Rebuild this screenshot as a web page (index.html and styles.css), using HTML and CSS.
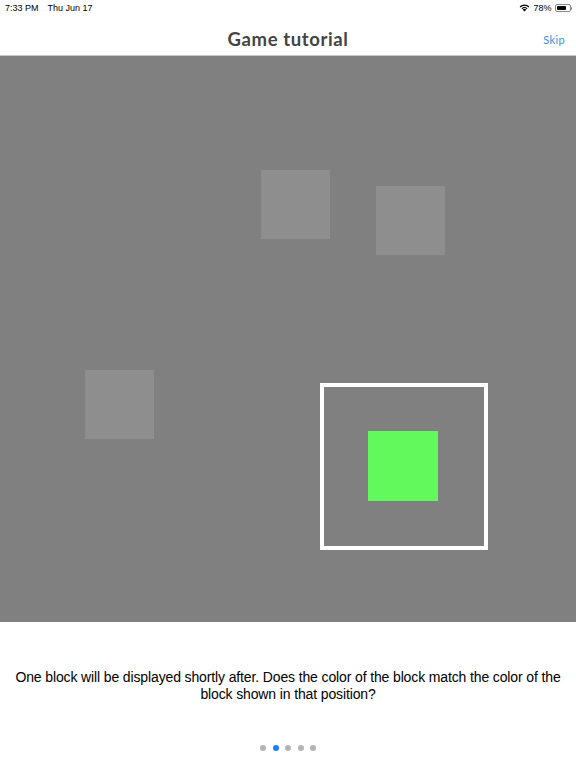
FILE: index.html
```html
<!DOCTYPE html>
<html>
<head>
<meta charset="utf-8">
<link rel="stylesheet" href="styles.css">
</head>
<body>
<div class="screen">
  <div class="status">
    <div class="status-left"><span>7:33 PM</span><span>Thu Jun 17</span></div>
    <div class="status-right">
      <svg class="wifi" width="11" height="8" viewBox="0 0 11 8"><path d="M5.5 7.6 L3.7 5.7 A2.6 2.6 0 0 1 7.3 5.7 Z" fill="#000"/><path d="M2.5 4.5 A4.3 4.3 0 0 1 8.5 4.5 L7.8 5.2 A3.3 3.3 0 0 0 3.2 5.2 Z" fill="#000"/><path d="M0.6 2.6 A7 7 0 0 1 10.4 2.6 L9.6 3.4 A5.9 5.9 0 0 0 1.4 3.4 Z" fill="#000"/></svg>
      <span>78%</span>
      <div class="battery"><div class="battery-body"><div class="battery-fill"></div></div><div class="battery-tip"></div></div>
    </div>
  </div>
  <div class="navbar">
    <div class="title">Game tutorial</div>
    <div class="skip">Skip</div>
  </div>
  <div class="board">
    <div class="block" style="left:261px;top:114px"></div>
    <div class="block" style="left:376px;top:130px"></div>
    <div class="block" style="left:85px;top:314px"></div>
    <div class="frame" style="left:320px;top:327px"></div>
    <div class="block green" style="left:368px;top:375px"></div>
  </div>
  <div class="caption">One block will be displayed shortly after. Does the color of the block match the color of the block shown in that position?</div>
  <div class="dots">
    <span class="dot"></span><span class="dot active"></span><span class="dot"></span><span class="dot"></span><span class="dot"></span>
  </div>
</div>
</body>
</html>
```
FILE: styles.css
```css
* { box-sizing: border-box; }
html, body { margin: 0; padding: 0; background: #fff; }
.screen { width: 576px; height: 768px; display: flex; flex-direction: column; font-family: "Liberation Sans", Arial, sans-serif; }
.status { height: 16px; display: flex; justify-content: space-between; align-items: center; padding: 0 4px 0 5px; font-size: 9px; color: #000; }
.status-left { display: flex; gap: 9px; }
.status-right { display: flex; align-items: center; gap: 3px; }
.wifi { display: block; }
.battery { display: flex; align-items: center; }
.battery-body { width: 16px; height: 8px; border: 1px solid #888; border-radius: 2px; padding: 1px; }
.battery-fill { width: 78%; height: 100%; background: #000; border-radius: 1px; }
.battery-tip { width: 1.5px; height: 3px; background: #888; border-radius: 0 1px 1px 0; }
.navbar { height: 40px; position: relative; display: flex; align-items: center; justify-content: center; border-bottom: 1px solid #c8c8c8; }
.title { font-family: "Lato", sans-serif; font-weight: 700; font-size: 18.5px; color: #444; letter-spacing: 0.6px; margin-top: 6px; }
.skip { position: absolute; right: 11px; top: 17px; font-family: "Lato", sans-serif; font-size: 11px; color: #3c8fe8; letter-spacing: 0.4px; }
.board { height: 566px; background: #808080; position: relative; }
.block { position: absolute; width: 69px; height: 69px; background: #8e8e8e; }
.block.green { background: #62f95d; width: 70px; height: 70px; }
.frame { position: absolute; width: 168px; height: 167px; border: 4.5px solid #fff; }
.caption { margin-top: 47px; padding: 0 8px; text-align: center; font-size: 14px; line-height: 17px; letter-spacing: -0.13px; color: #000; }
.dots { margin-top: 42px; display: flex; justify-content: center; gap: 6.5px; }
.dot { width: 6px; height: 6px; border-radius: 50%; background: #b4b4b4; }
.dot.active { background: #1a7ff2; }
```
